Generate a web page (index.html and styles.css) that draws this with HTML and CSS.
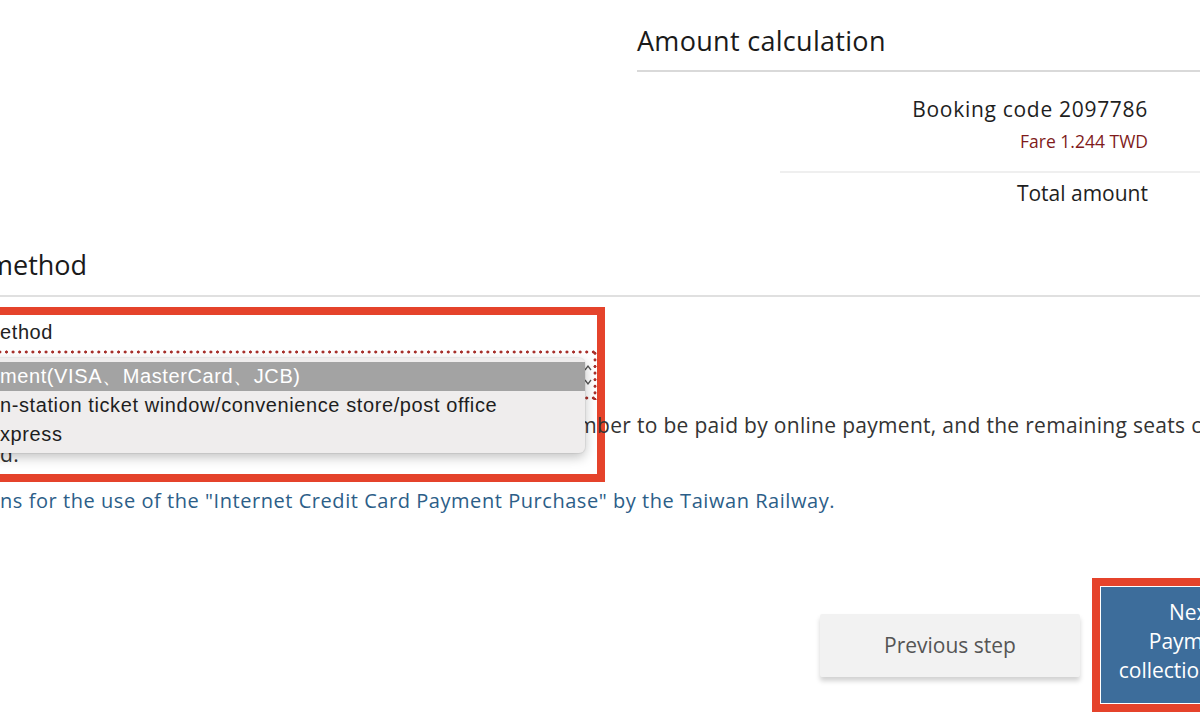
FILE: index.html
```html
<!DOCTYPE html>
<html lang="en">
<head>
<meta charset="utf-8">
<title>Payment</title>
<link rel="stylesheet" href="styles.css">
</head>
<body>
<div class="page">
  <section class="amount">
    <h2 class="amount-title">Amount calculation</h2>
    <div class="amount-body">
      <div class="booking">Booking code 2097786</div>
      <div class="fare">Fare 1.244 TWD</div>
      <div class="amount-divider"></div>
      <div class="total">Total amount</div>
    </div>
  </section>

  <section class="payment">
    <h2 class="pay-title">method</h2>
    <div class="pay-body">
      <div class="annot-select"></div>
      <div class="field-label">ethod</div>
      <div class="select">
        <svg class="chevrons" width="8" height="24" viewBox="0 0 8 24"><path d="M1 7 L4 3 L7 7 M1 17 L4 21 L7 17" fill="none" stroke="#555" stroke-width="1.3"/></svg>
        <ul class="menu">
          <li class="active">ment(VISA、MasterCard、JCB)</li>
          <li>n-station ticket window/convenience store/post office</li>
          <li>xpress</li>
        </ul>
      </div>
      <p class="note"><span class="note-l1">number to be paid by online payment, and the remaining seats cannot be</span><span class="note-l2">d.</span></p>
      <a class="link" href="#">ns for the use of the "Internet Credit Card Payment Purchase" by the Taiwan Railway.</a>
    </div>
  </section>

  <div class="actions">
    <button class="btn-prev">Previous step</button>
    <div class="annot-next">
      <button class="btn-next"><span>Next</span><span>Payment</span><span>collection page</span></button>
    </div>
  </div>
</div>
</body>
</html>
```

FILE: styles.css
```css
html, body {
  margin: 0;
  padding: 0;
  background: #ffffff;
}

body {
  font-family: "Open Sans", "Liberation Sans", sans-serif;
  color: #1e1e1e;
}

.page {
  width: 1200px;
  height: 728px;
  overflow: hidden;
  position: relative;
}

/* Amount calculation */
.amount {
  margin-left: 637px;
}

.amount-title {
  margin: 0;
  padding: 24px 0 12px;
  font-size: 27px;
  line-height: 34px;
  font-weight: 400;
  letter-spacing: 0.3px;
  color: #1a1a1a;
  border-bottom: 2px solid #d9d9d9;
}

.amount-body {
  padding-right: 52px;
  text-align: right;
}

.booking {
  margin-top: 24px;
  font-size: 21px;
  line-height: 26px;
  letter-spacing: 0.7px;
  color: #1e1e1e;
}

.fare {
  margin-top: 8px;
  font-size: 17.5px;
  line-height: 22px;
  color: #801b1b;
}

.amount-divider {
  margin: 19px -52px 0 143px;
  height: 2px;
  background: #efefef;
}

.total {
  margin-top: 7px;
  font-size: 21px;
  line-height: 26px;
  color: #1e1e1e;
}

/* Payment method */
.pay-title {
  margin: 42px 0 0;
  padding: 0 0 13px;
  font-size: 27px;
  line-height: 34px;
  font-weight: 400;
  color: #1a1a1a;
  text-indent: -12px;
  border-bottom: 2px solid #e0e0e0;
}

.pay-body {
  position: relative;
  padding-top: 23px;
}

.annot-select {
  position: absolute;
  top: 10px;
  left: -20px;
  width: 625px;
  height: 175px;
  box-sizing: border-box;
  border: 8px solid #e5432b;
  z-index: 1;
}

.field-label {
  font-family: "Liberation Sans", Arial, sans-serif;
  font-size: 20px;
  line-height: 24px;
  letter-spacing: 0.6px;
  color: #222;
}

.select {
  position: relative;
  margin-top: 6px;
  margin-left: -10px;
  width: 607px;
  height: 50px;
  box-sizing: border-box;
  background:
    radial-gradient(circle, #a8302b 1.3px, transparent 1.8px) 0 0 / 6.6px 4px repeat-x,
    radial-gradient(circle, #a8302b 1.3px, transparent 1.8px) 100% 0 / 4px 6.6px repeat-y,
    radial-gradient(circle, #a8302b 1.3px, transparent 1.8px) 0 100% / 6.6px 4px repeat-x;
}

.chevrons {
  position: absolute;
  right: 5px;
  top: 13px;
}

.menu {
  position: absolute;
  top: 8px;
  left: 0;
  width: 595px;
  height: 95px;
  box-sizing: border-box;
  margin: 0;
  padding: 4px 0;
  list-style: none;
  background: #efeded;
  border-radius: 6px;
  box-shadow: 0 4px 12px rgba(0, 0, 0, 0.25), 0 0 0 1px rgba(0, 0, 0, 0.05);
  z-index: 5;
}

.menu li {
  height: 29px;
  padding-left: 10px;
  font-family: "Liberation Sans", Arial, sans-serif;
  font-size: 20px;
  line-height: 29px;
  letter-spacing: 0.6px;
  color: #1e1e1e;
  white-space: nowrap;
  overflow: hidden;
}

.menu li.active {
  background: #a3a3a3;
  color: #ffffff;
}

.note {
  position: relative;
  z-index: 2;
  margin: 11px 0 0;
  font-size: 21px;
  line-height: 29px;
  letter-spacing: 0.3px;
  color: #333;
}

.note-l1 {
  display: block;
  padding-left: 551px;
  white-space: nowrap;
}

.note-l2 {
  display: block;
}

.link {
  display: block;
  margin-top: 17px;
  font-size: 20px;
  line-height: 29px;
  letter-spacing: 0.55px;
  color: #2c5e88;
  text-decoration: none;
  white-space: nowrap;
}

/* Actions */
.actions {
  display: flex;
  align-items: center;
  margin-left: 820px;
  margin-top: 63px;
}

.btn-prev {
  flex-shrink: 0;
  width: 260px;
  height: 63px;
  border: none;
  border-radius: 2px;
  background: #f2f2f2;
  box-shadow: 0 4px 5px rgba(0, 0, 0, 0.18);
  font-family: "Open Sans", "Liberation Sans", sans-serif;
  font-size: 21px;
  color: #555;
  padding: 0;
}

.annot-next {
  flex-shrink: 0;
  margin-left: 12px;
  border: 8px solid #e5432b;
  padding: 1px;
}

.btn-next {
  display: flex;
  flex-direction: column;
  align-items: center;
  justify-content: center;
  width: 182px;
  height: 116px;
  padding: 0 0 8px;
  border: none;
  background: #3d6d9b;
  color: #ffffff;
  font-family: "Open Sans", "Liberation Sans", sans-serif;
  font-size: 21px;
  line-height: 29px;
  white-space: nowrap;
}
```
